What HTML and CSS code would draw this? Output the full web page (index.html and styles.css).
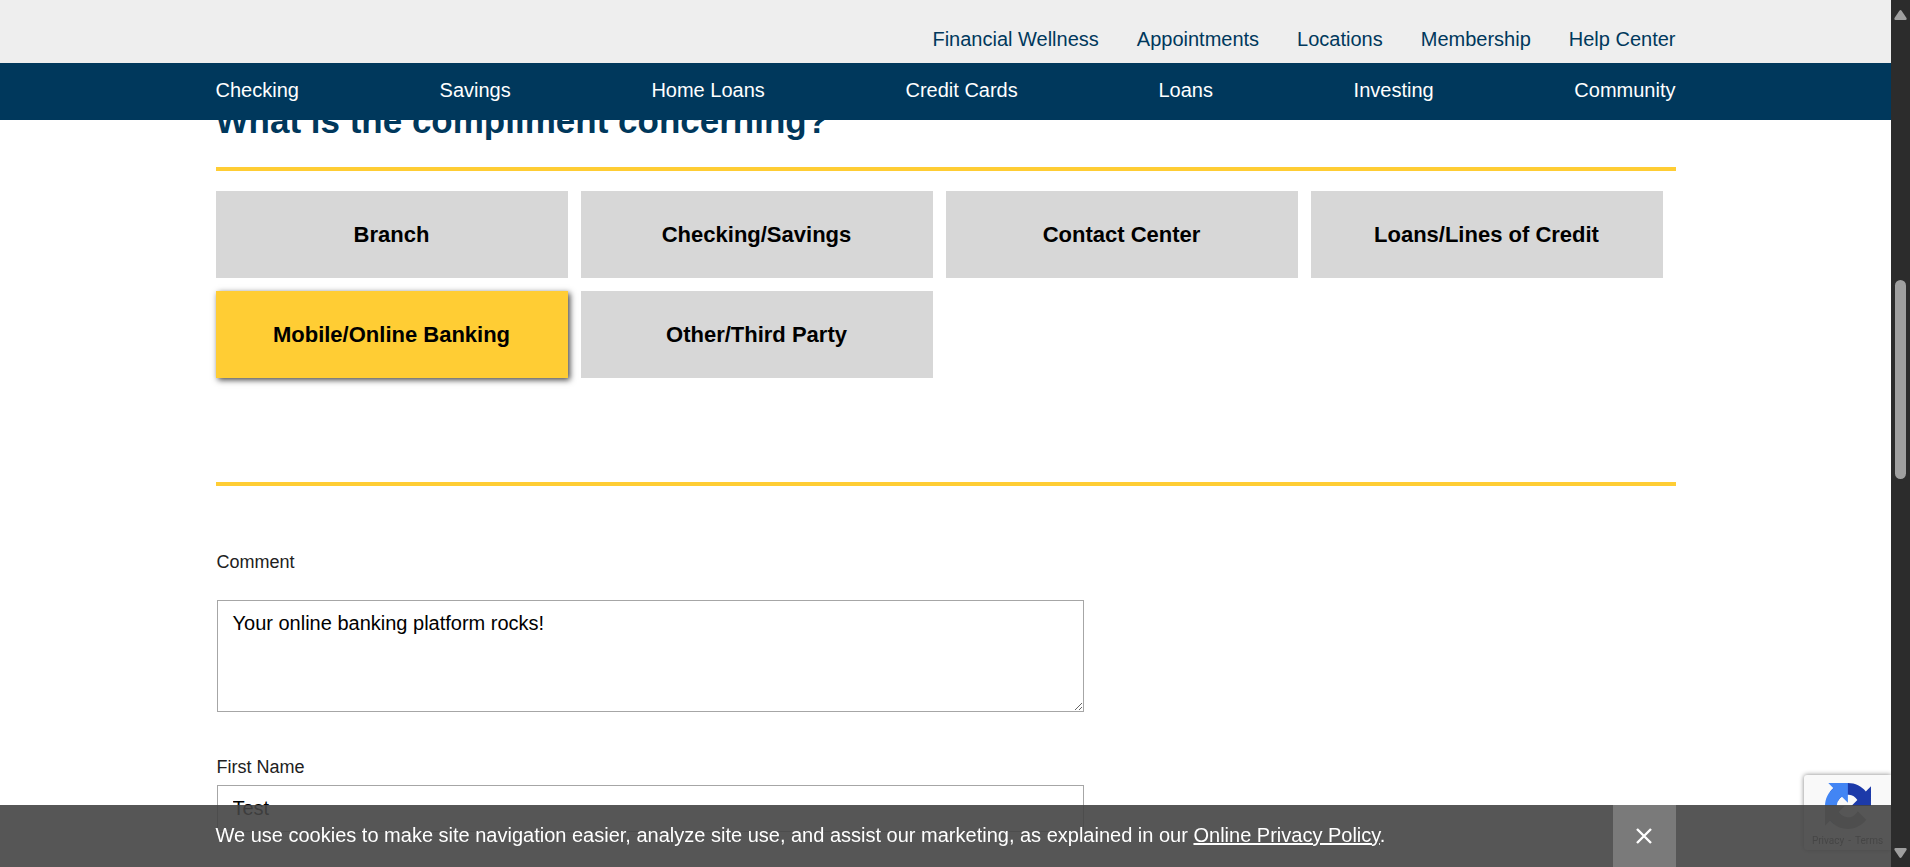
FILE: index.html
```html
<!DOCTYPE html>
<html lang="en">
<head>
<meta charset="utf-8">
<title>Compliment</title>
<link rel="stylesheet" href="styles.css">
</head>
<body>
<div class="page">
  <header class="header">
    <div class="header-top">
      <nav class="container utility-nav" aria-label="Utility">
        <a href="#">Financial Wellness</a>
        <a href="#">Appointments</a>
        <a href="#">Locations</a>
        <a href="#">Membership</a>
        <a href="#">Help Center</a>
      </nav>
    </div>
    <div class="header-main">
      <nav class="container main-nav" aria-label="Main">
        <a href="#">Checking</a>
        <a href="#">Savings</a>
        <a href="#">Home Loans</a>
        <a href="#">Credit Cards</a>
        <a href="#">Loans</a>
        <a href="#">Investing</a>
        <a href="#">Community</a>
      </nav>
    </div>
  </header>

  <main class="container content">
    <h1 class="heading">What is the compliment concerning?</h1>
    <hr class="rule">
    <div class="tiles">
      <button type="button" class="tile">Branch</button>
      <button type="button" class="tile">Checking/Savings</button>
      <button type="button" class="tile">Contact Center</button>
      <button type="button" class="tile">Loans/Lines of Credit</button>
      <button type="button" class="tile tile-selected" aria-pressed="true">Mobile/Online Banking</button>
      <button type="button" class="tile">Other/Third Party</button>
    </div>
    <hr class="rule">
    <form class="form">
      <div class="field field-comment">
        <label for="comment">Comment</label>
        <textarea id="comment" class="control comment">Your online banking platform rocks!</textarea>
      </div>
      <div class="field">
        <label for="first-name">First Name</label>
        <input id="first-name" class="control" type="text" value="Test">
      </div>
    </form>
  </main>
</div>

<aside class="badge">
  <svg class="badge-logo" viewBox="0 0 64 64" aria-hidden="true">
    <path fill="#1c3aa9" d="M64 31.955l-.033-1.37V4.687l-7.16 7.16C50.948 4.674 42.033.093 32.05.093c-10.4 0-19.622 4.96-25.458 12.64l11.736 11.86a15.55 15.55 0 0 1 4.754-5.334c2.05-1.6 4.952-2.906 8.968-2.906.485 0 .86.057 1.135.163 4.976.393 9.288 3.14 11.828 7.124l-8.307 8.307L64 31.953"/>
    <path fill="#4285f4" d="M31.862.094l-1.37.033H4.594l7.16 7.16C4.58 13.147 0 22.06 0 32.046c0 10.4 4.96 19.622 12.64 25.458L24.5 45.768a15.55 15.55 0 0 1-5.334-4.754c-1.6-2.05-2.906-4.952-2.906-8.968 0-.485.057-.86.163-1.135.393-4.976 3.14-9.288 7.124-11.828l8.307 8.307L31.86.095"/>
    <path fill="#ababab" d="M.001 32.045l.033 1.37v25.898l7.16-7.16c5.86 7.173 14.774 11.754 24.76 11.754 10.4 0 19.622-4.96 25.458-12.64l-11.736-11.86a15.55 15.55 0 0 1-4.754 5.334c-2.05 1.6-4.952 2.906-8.968 2.906-.485 0-.86-.057-1.135-.163-4.976-.393-9.288-3.14-11.828-7.124l8.307-8.307c-10.522.04-22.4.066-27.295-.005"/>
  </svg>
  <div class="badge-links"><a href="#">Privacy</a><span>-</span><a href="#">Terms</a></div>
</aside>

<section class="cookies" aria-label="Cookie notice">
  <div class="container cookies-row">
    <p class="cookies-text">We use cookies to make site navigation easier, analyze site use, and assist our marketing, as explained in our <a href="#">Online Privacy Policy</a>.</p>
    <button type="button" class="cookies-close" aria-label="Close">
      <svg width="18" height="18" viewBox="0 0 18 18" aria-hidden="true"><path d="M2 2l14 14M16 2l-14 14" stroke="#fff" stroke-width="2.4" fill="none"/></svg>
    </button>
  </div>
</section>

<div class="scrollbar" aria-hidden="true">
  <svg width="13" height="10" viewBox="0 0 13 10"><path d="M7.800 1L12.500 8Q13 10 11.500 10H1.500Q0 10 .500 8L5.200 1Q6.500-.800 7.800 1Z" fill="#9f9f9f"/></svg>
  <div class="scroll-track"><div class="scroll-thumb"></div></div>
  <svg width="13" height="10" viewBox="0 0 13 10"><path d="M7.800 9L12.500 2Q13 0 11.500 0H1.500Q0 0 .500 2L5.200 9Q6.500 10.800 7.800 9Z" fill="#9f9f9f"/></svg>
</div>
</body>
</html>
```

FILE: styles.css
```css
* {
  box-sizing: border-box;
}

:root {
  --navy: #00385c;
  --gold: #ffcd34;
  --scrollbar: 19px;
}

body {
  margin: 0;
  overflow: hidden;
  background: #fff;
  color: #212121;
  font: 20px/24px "Liberation Sans", Arial, sans-serif;
}

button,
input,
textarea {
  font: inherit;
}

.page {
  padding-right: var(--scrollbar);
}

.container {
  width: calc(100% - 32px);
  max-width: 1460px;
  margin: 0 auto;
}

.header {
  position: fixed;
  z-index: 2;
  top: 0;
  left: 0;
  right: var(--scrollbar);
}

.header-top {
  padding: 27px 0 12px;
  background: #eee;
}

.header-main {
  padding: 15px 0 18px;
  background: var(--navy);
}

.header a {
  text-decoration: none;
}

.utility-nav {
  display: flex;
  justify-content: flex-end;
  gap: 38px;
}

.utility-nav a {
  color: var(--navy);
}

.main-nav {
  display: flex;
  justify-content: space-between;
}

.main-nav a {
  color: #fff;
}

.content {
  padding-top: 101px;
}

.heading {
  margin: 0 0 26px;
  color: var(--navy);
  font-size: 35px;
  line-height: 40px;
}

.rule {
  height: 4px;
  margin: 0;
  border: 0;
  background: var(--gold);
}

.tiles {
  display: grid;
  grid-template-columns: repeat(4, 1fr);
  gap: 13px;
  padding: 20px 13px 104px 0;
}

.tile {
  min-height: 87px;
  padding: 0 12px;
  border: 0;
  background: #d7d7d7;
  color: #000;
  font-size: 22px;
  font-weight: bold;
}

.tile-selected {
  background: var(--gold);
  box-shadow: 2px 2px 6px #444;
}

.form {
  max-width: 868px;
  padding: 64px 0 16px 1px;
}

.field {
  display: flex;
  flex-direction: column;
  gap: 6px;
}

.field-comment {
  gap: 26px;
  margin-bottom: 43px;
}

.field label {
  font-size: 18px;
}

.control {
  height: 47px;
  padding: 10px 15px;
  border: 1px solid #a6a6a6;
  border-radius: 0;
  background: #fff;
  color: #000;
}

.comment {
  height: 112px;
  resize: both;
}

.badge {
  position: fixed;
  z-index: 3;
  right: var(--scrollbar);
  bottom: 17px;
  width: 87px;
  padding: 8px 0 2px;
  border-radius: 3px 0 0 3px;
  background: #f9f9f9;
  box-shadow: 0 0 5px gray;
}

.badge-logo {
  display: block;
  width: 46px;
  height: 46px;
  margin: 0 auto 4px;
}

.badge-links {
  display: flex;
  justify-content: center;
  gap: 4px;
  color: #555;
  font: 10px/15px Roboto, sans-serif;
}

.badge-links a {
  color: inherit;
  text-decoration: none;
}

.cookies {
  position: fixed;
  z-index: 4;
  left: 0;
  right: var(--scrollbar);
  bottom: 0;
  background: rgba(68, 68, 68, 0.9);
  color: #fff;
}

.cookies-row {
  display: flex;
  justify-content: space-between;
}

.cookies-text {
  margin: 0;
  padding: 18px 0 20px;
}

.cookies-text a {
  color: inherit;
}

.cookies-close {
  display: flex;
  align-items: center;
  justify-content: center;
  width: 63px;
  padding: 0;
  border: 0;
  background: #7a7a7a;
}

.scrollbar {
  position: fixed;
  z-index: 5;
  top: 0;
  right: 0;
  bottom: 0;
  width: var(--scrollbar);
  display: flex;
  flex-direction: column;
  align-items: center;
  padding: 10px 0 9px;
  background: #2c2c2c;
}

.scroll-track {
  flex: 1;
  padding-top: 260px;
}

.scroll-thumb {
  width: 11px;
  height: 199px;
  border-radius: 6px;
  background: #9f9f9f;
}
```
